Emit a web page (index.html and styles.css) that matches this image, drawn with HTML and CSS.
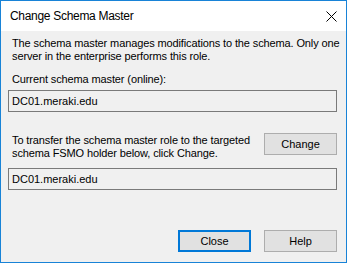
FILE: index.html
```html
<!DOCTYPE html>
<html>
<head>
<meta charset="utf-8">
<link rel="stylesheet" href="styles.css">
</head>
<body>
<div class="window">
  <div class="titlebar">
    <span class="title">Change Schema Master</span>
    <svg class="close-x" width="11" height="11" viewBox="0 0 11 11"><path d="M0.5 0.5 L10.5 10.5 M10.5 0.5 L0.5 10.5" stroke="#000" stroke-width="1" fill="none"/></svg>
  </div>
  <div class="content">
    <p class="text intro">The schema master manages modifications to the schema. Only one<br>server in the enterprise performs this role.</p>
    <p class="text label">Current schema master (online):</p>
    <div class="field">DC01.meraki.edu</div>
    <div class="transfer-row">
      <p class="text">To transfer the schema master role to the targeted<br>schema FSMO holder below, click Change.</p>
      <button class="btn">Change</button>
    </div>
    <div class="field field-2">DC01.meraki.edu</div>
    <div class="footer">
      <button class="btn btn-default">Close</button>
      <button class="btn">Help</button>
    </div>
  </div>
</div>
</body>
</html>
```
FILE: styles.css
```css
html, body {
  margin: 0;
  padding: 0;
}
body {
  width: 347px;
  height: 263px;
  overflow: hidden;
  font-family: "Liberation Sans", Arial, sans-serif;
  font-size: 11px;
  color: #000;
}
.window {
  width: 347px;
  height: 263px;
  box-sizing: border-box;
  border: 1px solid #1883d7;
  display: flex;
  flex-direction: column;
  background: #f0f0f0;
}
.titlebar {
  height: 30px;
  flex: none;
  background: #fff;
  display: flex;
  align-items: center;
  justify-content: space-between;
  padding: 0 9px 0 9px;
}
.title {
  font-size: 12px;
  letter-spacing: -0.3px;
  margin-top: -1px;
}
.close-x {
  display: block;
  margin-top: 1px;
}
.content {
  flex: 1;
  display: flex;
  flex-direction: column;
  padding: 6px 9px 10px 7px;
}
.text {
  margin: 0 0 0 4px;
  line-height: 13px;
  white-space: nowrap;
  letter-spacing: -0.12px;
}
.label {
  margin-top: 10px;
}
.field {
  margin-top: 4px;
  height: 22px;
  box-sizing: border-box;
  border: 1px solid #7a7a7a;
  background: #f0f0f0;
  padding: 0 3px;
  line-height: 20px;
}
.transfer-row {
  margin-top: 21px;
  display: flex;
  justify-content: space-between;
  align-items: flex-start;
}
.transfer-row .text {
  margin-top: 1px;
}
.field-2 {
  margin-top: 8px;
}
.btn {
  width: 73px;
  height: 22px;
  box-sizing: border-box;
  border: 1px solid #adadad;
  background: #e1e1e1;
  font-family: "Liberation Sans", Arial, sans-serif;
  font-size: 11px;
  color: #000;
  padding: 0;
  margin: 0;
}
.btn-default {
  border: 2px solid #0078d7;
}
.footer {
  margin-top: auto;
  display: flex;
  justify-content: flex-end;
  gap: 13px;
}
```
